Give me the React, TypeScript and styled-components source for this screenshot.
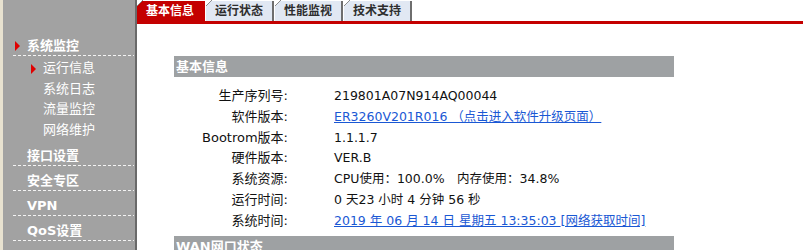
import styled, { createGlobalStyle } from "styled-components"

const GlobalStyle = createGlobalStyle`
  html, body {
    margin: 0;
    padding: 0;
    background: #fff;
  }
  body {
    font-family: "DejaVu Sans", "Noto Sans CJK SC", sans-serif;
    font-size: 13px;
    color: #111;
  }
`

const Page = styled.div`
  display: flex;
  width: 803px;
  height: 250px;
  overflow: hidden;
`

const Strip = styled.div`
  width: 3px;
  background: #e8e2d0;
  flex: 0 0 3px;
`

const Sidebar = styled.nav`
  flex: 0 0 134px;
  box-sizing: border-box;
  background: #a2a2a2;
  border-right: 2px solid #6a6a6a;
  padding: 31px 1px 0 10px;
  color: #fff;
`

const dashes = `repeating-linear-gradient(90deg, #f4f4f4 0 3px, transparent 3px 5px) left bottom / 100% 1px no-repeat`

const MenuHead = styled.div<{ $open?: boolean }>`
  position: relative;
  padding: 6px 0 1px 14px;
  line-height: 18px;
  font-weight: bold;
  background: ${dashes};

  ${(p) =>
    p.$open &&
    `
    &::before {
      content: "";
      position: absolute;
      left: 2px;
      top: 10px;
      border-style: solid;
      border-width: 5px 0 5px 5px;
      border-color: transparent transparent transparent #e00000;
    }
  `}
`

const SubList = styled.ul`
  list-style: none;
  margin: 0;
  padding: 2px 0 0 0;
`

const SubItem = styled.li<{ $active?: boolean }>`
  position: relative;
  padding-left: 30px;
  line-height: 20.7px;

  ${(p) =>
    p.$active &&
    `
    &::before {
      content: "";
      position: absolute;
      left: 18px;
      top: 6px;
      border-style: solid;
      border-width: 5px 0 5px 5px;
      border-color: transparent transparent transparent #e00000;
    }
  `}
`

const Main = styled.main`
  flex: 1;
  display: flex;
  flex-direction: column;
`

const TabBar = styled.div`
  display: flex;
  gap: 1px;
  height: 21px;
  border-bottom: 3px solid #c40000;
`

const Tab = styled.div<{ $active?: boolean }>`
  position: relative;
  height: 20px;
  margin-top: 1px;
  padding: 0 9px;
  line-height: 21px;
  font-size: 12px;
  font-weight: bold;
  background: ${(p) => (p.$active ? "#c40000" : "#e1e8f3")};
  color: ${(p) => (p.$active ? "#fff" : "#2e2e2e")};
  border-right: 2px solid ${(p) => (p.$active ? "#c40000" : "#6e6e6e")};

  &::before {
    content: "";
    position: absolute;
    left: 0;
    top: -1px;
    width: 6px;
    height: 6px;
    background: linear-gradient(135deg, #fff 0 42%, #8a8a8a 42% 58%, transparent 58%);
  }
`

const Content = styled.div`
  padding: 32px 0 0 37px;
`

const Section = styled.section`
  width: 500px;
`

const SectionHead = styled.div`
  height: 21px;
  line-height: 21px;
  padding-left: 2px;
  background: #9ea1a3;
  color: #fff;
  font-weight: bold;
`

const InfoGrid = styled.dl`
  display: grid;
  grid-template-columns: 114px 1fr;
  column-gap: 46px;
  margin: 9px 0 4px;
`

const Label = styled.dt`
  text-align: right;
  line-height: 20.8px;
  white-space: nowrap;
`

const Value = styled.dd`
  margin: 0;
  font-size: 12.5px;
  line-height: 20.8px;
  white-space: nowrap;
`

const Link = styled.a`
  color: #1a58d4;
  text-decoration: underline;
  cursor: pointer;
`

const rows: [string, React.ReactNode][] = [
  ["生产序列号:", "219801A07N914AQ00044"],
  ["软件版本:", <Link>ER3260V201R016 （点击进入软件升级页面）</Link>],
  ["Bootrom版本:", "1.1.1.7"],
  ["硬件版本:", "VER.B"],
  ["系统资源:", "CPU使用：100.0%　内存使用：34.8%"],
  ["运行时间:", "0 天23 小时 4 分钟 56 秒"],
  [
    "系统时间:",
    <>
      <Link>2019 年 06 月 14 日 星期五 13:35:03 </Link>
      <Link>[网络获取时间]</Link>
    </>,
  ],
]

export default function App() {
  return (
    <>
      <GlobalStyle />
      <Page>
        <Strip />
        <Sidebar>
          <MenuHead $open>系统监控</MenuHead>
          <SubList>
            <SubItem $active>运行信息</SubItem>
            <SubItem>系统日志</SubItem>
            <SubItem>流量监控</SubItem>
            <SubItem>网络维护</SubItem>
          </SubList>
          <MenuHead>接口设置</MenuHead>
          <MenuHead>安全专区</MenuHead>
          <MenuHead>VPN</MenuHead>
          <MenuHead>QoS设置</MenuHead>
        </Sidebar>
        <Main>
          <TabBar>
            <Tab $active>基本信息</Tab>
            <Tab>运行状态</Tab>
            <Tab>性能监视</Tab>
            <Tab>技术支持</Tab>
          </TabBar>
          <Content>
            <Section>
              <SectionHead>基本信息</SectionHead>
              <InfoGrid>
                {rows.map(([label, value]) => (
                  <>
                    <Label key={label}>{label}</Label>
                    <Value>{value}</Value>
                  </>
                ))}
              </InfoGrid>
              <SectionHead>WAN网口状态</SectionHead>
            </Section>
          </Content>
        </Main>
      </Page>
    </>
  )
}
